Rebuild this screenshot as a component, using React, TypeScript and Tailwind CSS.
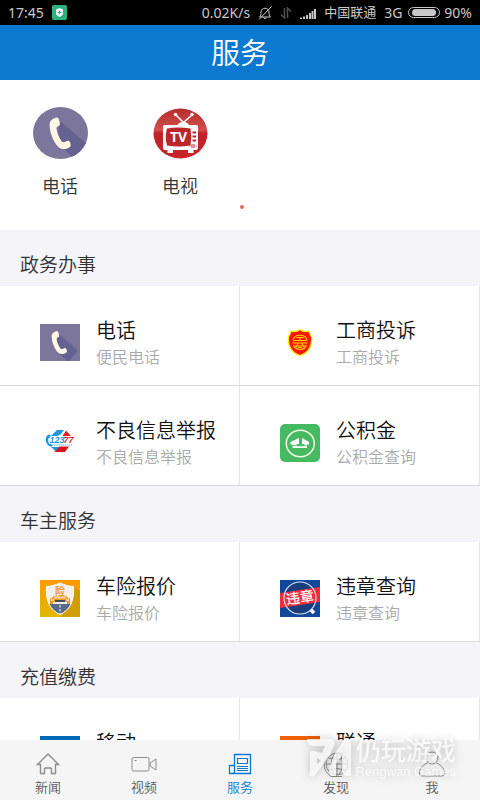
import React from "react";

type Item = { title: string; sub: string; icon: React.ReactNode };

const Phone = () => (
  <svg viewBox="0 0 40 37" className="h-[37px] w-10" aria-hidden="true">
    <path fill="#7c769d" d="M0 0h40v37H0z" />
    <path fill="#656191" d="M18 9 38 27l-9 10h-2L16 26z" />
    <PhoneShape />
  </svg>
);

const PhoneShape = () => (
  <path
    fill="#fdf8e4"
    d="M17 7c-2.500.3-5 2-5.300 4.600C11.400 18 15 26.500 19 29.300c2 1.400 6.500.8 7.800-1.300.5-1-.1-2.700-.9-3.600-.6-.7-1.800-.2-2.800.4-1 .5-2 .5-2.700-.4-2-2.700-3.300-6-3.800-9.200 0-1.200.5-1.600 1.500-2 .9-.4 1.100-1 1-1.800C18.900 9.600 18.300 7 17 7z"
  />
);

const PhoneRound = () => (
  <svg viewBox="0 0 55 52" className="h-[52px] w-[55px]" aria-hidden="true">
    <defs>
      <clipPath id="phone-round">
        <ellipse cx="27.500" cy="26" rx="27.500" ry="26" />
      </clipPath>
    </defs>
    <g clipPath="url(#phone-round)">
      <path fill="#7c769d" d="M0 0h55v52H0z" />
      <path fill="#656191" d="M27 14 55 38v14H41L24 35z" />
      <g transform="translate(0.500 0.800) scale(1.380 1.370)">
        <PhoneShape />
      </g>
    </g>
  </svg>
);

const Tv = () => (
  <svg viewBox="0 0 55 52" className="h-[52px] w-[55px]" aria-hidden="true">
    <defs>
      <clipPath id="tv-round">
        <ellipse cx="27.500" cy="26.500" rx="27" ry="25" />
      </clipPath>
      <linearGradient id="tv-red" x1="0" y1="0" x2="0" y2="1">
        <stop offset="0" stopColor="#b52a2c" />
        <stop offset="0.450" stopColor="#d0504b" />
        <stop offset="0.500" stopColor="#bd2328" />
        <stop offset="1" stopColor="#c9242a" />
      </linearGradient>
    </defs>
    <g clipPath="url(#tv-round)">
      <path fill="url(#tv-red)" d="M0 0h55v52H0z" />
      <path d="m22.500 7.500 8 8 9-8" stroke="#fff" strokeWidth="1.500" fill="none" />
      <circle cx="22.500" cy="7.500" r="1.700" fill="#fff" />
      <circle cx="39" cy="7.500" r="1.700" fill="#fff" />
      <path d="M24.500 18c1.500-4 10-4 11.500 0z" fill="#fff" />
      <rect x="10" y="18" width="35" height="25" rx="2" fill="#fff" />
      <path d="M14.500 42h5.500v4h-5.500zM35 42h5.500v4H35z" fill="#fff" />
      <path d="M14 21.500q11.500-2 23.500 0 1.500 8.500 0 17-12 2-23.500 0-2.500-8.500 0-17z" fill="#bd252a" />
      <text x="25.500" y="35" textAnchor="middle" fontSize="14" fontWeight="700" fill="#fff" className="font-['Open_Sans',sans-serif]">TV</text>
      <path d="M39.500 25.500h3.500m-3.500 4h3.500m-3.500 4h3.500" stroke="#bd252a" strokeWidth="2.200" />
      <path d="M37 38.500v1m2-2.500v4m2-4v4m2-2.500v1" stroke="#bd252a" strokeWidth="1" />
    </g>
  </svg>
);

const Shield = () => (
  <svg viewBox="0 0 40 37" className="h-[37px] w-10" aria-hidden="true">
    <path d="M20 5.500c3 2.500 5.500 2.500 9 1.700 1 3 2 4.300 2.700 6C32 22 28 29 20 31.500 12 29 8 22 8.300 13.200c.7-1.700 1.700-3 2.700-6 3.500.8 6 .8 9-1.700z" fill="#f8160b" stroke="#fff000" strokeWidth="1.300" />
    <g fill="none" stroke="#ffd400" strokeWidth="1.100">
      <path d="M13 16.500c1-7 13-7 14 0M13.500 21c2 6 11 6 13 0" />
      <path d="M16.500 13.500h7m-3.500 0v3m-6.500 0h13m-14 2.500h15M15 22h10m-7-2.500-2 4m6-4 2 4m-6 0h4" />
    </g>
  </svg>
);

const Hotline = () => (
  <svg viewBox="0 0 40 37" className="h-[37px] w-10" aria-hidden="true">
    <path d="m11 12 6-6h7l-4 5-3 1z" fill="#1b98e0" />
    <path d="m26 6.500 5 5.500h-8.500z" fill="#dc1e26" />
    <path d="m11 23 5 4.500 3-2 2.500-2.500z" fill="#1b98e0" />
    <path d="m19.500 22.500-5 5.500h10.500l4-5.500z" fill="#d9141c" />
    <path d="M8.500 10.500c-4 2.500-3.500 8 .2 11.300 1 1 3.300.9 3.800.1l-1.500-2.200-1.600.3c-1.300-2-1.500-4-.8-6l1.700-.4.2-2.500z" fill="#1b98e0" />
    <g fontSize="9" fontWeight="700" fontStyle="italic" className="font-['Liberation_Sans',sans-serif]">
      <text x="9.500" y="19" fill="#1b98e0">123</text>
      <text x="23.500" y="18.500" fill="#dc1e26">77</text>
    </g>
    <path d="M12 21h20" stroke="#58b2e6" strokeWidth="1" strokeDasharray="1.500 0.600" />
  </svg>
);

const Fund = () => (
  <svg viewBox="0 0 40 38" className="h-[38px] w-10" aria-hidden="true">
    <rect width="40" height="38" rx="5" fill="#45ba63" />
    <ellipse cx="20.300" cy="19.500" rx="14" ry="13.200" fill="none" stroke="#f4f7df" strokeWidth="1.500" />
    <path d="M19 14v6h-2v1.500h7V20h-2v-6l7 4v2.500h-2V24H12.500v-3.500H10.500V18z" fill="#fff" />
    <path d="M17 20v1.700h7V20M12 21.700h17" fill="none" stroke="#45ba63" strokeWidth="0.800" />
  </svg>
);

const Insurance = () => (
  <svg viewBox="0 0 40 37" className="h-[37px] w-10" aria-hidden="true">
    <defs>
      <linearGradient id="amber" x1="0" y1="0" x2="0" y2="1">
        <stop offset="0" stopColor="#ff9800" />
        <stop offset="1" stopColor="#dfb900" />
      </linearGradient>
      <clipPath id="badge">
        <path d="M20 3c5 2 9 3.500 13.500 3.500C34.500 21 30 30 20 34.500 10 30 5.500 21 6.500 6.500 11 6.500 15 5 20 3z" />
      </clipPath>
    </defs>
    <path fill="url(#amber)" d="M0 0h40v37H0z" />
    <path fill="#c99500" opacity="0.700" d="m34 6 6 5v26H21z" />
    <g clipPath="url(#badge)">
      <path fill="#f2f1ed" d="M0 0h40v37H0z" />
      <path fill="#576a8b" d="M0 24h40v13H0z" />
      <path d="M20 25v12" stroke="#fff" strokeWidth="1" strokeDasharray="2.500 1.500" />
    </g>
    <path d="M20 3c5 2 9 3.500 13.500 3.500C34.500 21 30 30 20 34.500 10 30 5.500 21 6.500 6.500 11 6.500 15 5 20 3z" fill="none" stroke="#fff" strokeWidth="1" />
    <text x="20" y="15" textAnchor="middle" fontSize="10" fontWeight="700" fill="#f59a25" className="font-['Noto_Sans_CJK_SC',sans-serif]">险</text>
    <path d="m13 16.500 1-.5h12l1 .5 1.500 2h1.500V24h-3v-2H13v2h-3v-5.500h1.500z" fill="#f29a25" />
    <path d="M13.500 18.500h13l-1-2h-11z" fill="#fbd9a0" />
    <path d="M15 20h10v2H15z" fill="#444c5c" />
    <path d="M11 20h3m12 0h3" stroke="#fff" strokeWidth="1.200" />
  </svg>
);

const Violation = () => (
  <svg viewBox="0 0 40 37" className="h-[37px] w-10" aria-hidden="true">
    <path fill="#10489a" d="M0 0h40v37H0z" />
    <circle cx="20" cy="18" r="16" fill="#1b3d7d" />
    <path fill="#ee2e3a" d="M0 13 40 7v15L0 28z" />
    <circle cx="20" cy="18" r="16" fill="none" stroke="#d9e2ef" strokeWidth="1.200" />
    <path d="m31 30 3 3" stroke="#fff" strokeWidth="3.500" />
    <text x="20" y="22.500" transform="rotate(-8 20 18)" textAnchor="middle" fontSize="14" fontWeight="500" fill="#fff" className="font-['Noto_Sans_CJK_SC',sans-serif]">违章</text>
  </svg>
);

const Mobile = () => <span className="block h-[37px] w-10 bg-[#0068b7]" />;
const Unicom = () => <span className="block h-[37px] w-10 bg-[#ef6100]" />;

const sections: { name: string; items: Item[] }[] = [
  {
    name: "政务办事",
    items: [
      { title: "电话", sub: "便民电话", icon: <Phone /> },
      { title: "工商投诉", sub: "工商投诉", icon: <Shield /> },
      { title: "不良信息举报", sub: "不良信息举报", icon: <Hotline /> },
      { title: "公积金", sub: "公积金查询", icon: <Fund /> },
    ],
  },
  {
    name: "车主服务",
    items: [
      { title: "车险报价", sub: "车险报价", icon: <Insurance /> },
      { title: "违章查询", sub: "违章查询", icon: <Violation /> },
    ],
  },
  {
    name: "充值缴费",
    items: [
      { title: "移动", sub: "", icon: <Mobile /> },
      { title: "联通", sub: "", icon: <Unicom /> },
    ],
  },
];

const tabs = [
  {
    name: "新闻",
    icon: <path d="M1.500 12.500 12 2l10.500 10.500H19.500V21.500H15.500V17q0-1-1-1h-5q-1 0-1 1v4.500h-4v-9z" strokeWidth="1.400" />,
  },
  {
    name: "视频",
    icon: (
      <>
        <rect x="0" y="5.500" width="17" height="13.500" rx="1.500" />
        <path d="m18 11 6-4v11l-6-4zM2.500 8.500h2" />
      </>
    ),
  },
  {
    name: "服务",
    icon: (
      <>
        <path d="M6.500 2.500h16v19h-21v-8h5zM6.500 13.500v6q0 2-2 2" strokeWidth="1.300" />
        <path d="M9.500 6.500h10v5h-10zM9 14.500h11m-11 2h11m-11 2h11" strokeWidth="1.200" />
      </>
    ),
  },
  {
    name: "发现",
    icon: (
      <>
        <ellipse cx="13" cy="12" rx="11" ry="11" />
        <ellipse cx="13" cy="12" rx="5.500" ry="11" />
        <path d="M13 1v22M2 12h22M4.500 6q8.500 3 17 0M4.500 18q8.500-3 17 0" />
        <path d="M4 4C-2 10-1 19 7 24.500h11" />
      </>
    ),
  },
  {
    name: "我",
    icon: (
      <>
        <circle cx="12" cy="6" r="6" />
        <path d="M7.500 11C2 13.500-.5 17-.5 21q0 3 2.500 3h20q2.500 0 2.500-3c0-4-2.500-7.500-8-10" />
      </>
    ),
  },
];

const StatusBar = () => (
  <div className="flex h-[25px] shrink-0 items-center justify-between bg-black px-2 text-sm font-normal text-[#c8c8c8]">
    <div className="flex items-center gap-2">
      <span>17:45</span>
      <svg viewBox="0 0 15 15" className="size-[15px]" aria-hidden="true">
        <rect width="15" height="15" rx="2" fill="#30b07c" />
        <path d="M7.500 3 11 4.500v3.700c0 1.600-1.500 2.800-3.500 3.800C5.500 11 4 9.800 4 8.200V4.500z" fill="#fff" />
        <path d="M7.500 5.500v4m-2-2h4" stroke="#30b07c" />
      </svg>
    </div>
    <div className="flex items-center gap-2">
      <span>0.02K/s</span>
      <svg viewBox="0 0 14 14" className="size-3.5" fill="none" stroke="#c8c8c8" aria-hidden="true">
        <path d="M1.500 11h11c-1.500-1-1.500-3-1.500-5 0-5-8-5-8 0 0 2 0 4-1.500 5zM5.500 11.500q1.500 2.500 3 0M13.500.5 1 13.500" />
      </svg>
      <svg viewBox="0 0 12 12" className="size-3" fill="none" stroke="#505050" strokeWidth="1.500" aria-hidden="true">
        <path d="M4.500 1v10L1 7.500M7.500 11V1L11 4.500" />
      </svg>
      <svg viewBox="0 0 16 12" className="h-3 w-4" stroke="#c8c8c8" strokeWidth="2" aria-hidden="true">
        <path d="M1 12v-1.500M4 12V9.500M7 12V8M10 12V6M12.500 12V4M15 12V2" />
      </svg>
      <span className="text-[13px]">中国联通</span>
      <span className="flex items-center gap-1.5">
        <span>3G</span>
        <span className="block h-[11px] w-8 rounded-full border border-[#c8c8c8] px-[3px] py-px">
          <span className="block h-full rounded-sm bg-[#c8c8c8]" />
        </span>
      </span>
      <span className="-ml-1">90%</span>
    </div>
  </div>
);

const Watermark = () => (
  <div className="pointer-events-none absolute right-6 bottom-5 flex items-center gap-1 text-white/75 drop-shadow-[0_0_5px_rgba(0,0,0,0.3)]">
    <svg viewBox="0 0 46 40" className="h-10 w-[46px]" fill="currentColor" aria-hidden="true">
      <path
        fillRule="evenodd"
        d="M1 1h23q6 0 4 6l-4 10L10 36q-3 4-6 2V16q0-4 4-3l8 2 3-7H6Q2 8 1 1zM11 20v6l4-3z"
      />
      <path d="m28 17 9-14q1-2 4-2h4v37q-8 1-9-5V17l-6 9v12q-7 0-7-6z" />
    </svg>
    <div className="flex flex-col items-end">
      <span className="text-[25px] leading-7 font-medium">仍玩游戏</span>
      <span className="font-['Liberation_Sans',sans-serif] text-[13px] leading-4 font-normal">Rengwan Games</span>
    </div>
  </div>
);

export default function App() {
  return (
    <div className="relative flex h-screen flex-col overflow-hidden bg-[#f4f4f9] font-['Noto_Sans','Noto_Sans_CJK_SC',sans-serif] font-[350]">
      <StatusBar />
      <header className="flex h-[55px] shrink-0 items-center justify-center bg-[#0b79d0]">
        <h1 className="text-[29px] leading-none font-[350] text-white">服务</h1>
      </header>
      <main className="min-h-0 flex-1 overflow-hidden">
        <div className="flex h-[150px] flex-col bg-white">
          <div className="grid grid-cols-4 pt-[27px]">
            <button type="button" className="flex flex-col items-center gap-[15px] text-lg text-[#333]">
              <PhoneRound />
              <span className="leading-6">电话</span>
            </button>
            <button type="button" className="flex flex-col items-center gap-[15px] text-lg text-[#333]">
              <Tv />
              <span className="leading-6">电视</span>
            </button>
          </div>
          <div className="flex justify-center pt-[7px] pl-1">
            <span className="size-1 rounded-full bg-[#f0655c]" />
          </div>
        </div>
        {sections.map((s) => (
          <section key={s.name}>
            <h2 className="flex h-14 items-center px-5 pt-[15px] text-[19px] text-[#333]">{s.name}</h2>
            <div className="grid grid-cols-2">
              {s.items.map((it) => (
                <button
                  type="button"
                  key={it.title}
                  className="flex h-[100px] items-center gap-4 border-r border-b border-[#d8d8dc] border-r-[#e4e4e8] bg-white pt-[14px] pl-10 text-left"
                >
                  {it.icon}
                  <span className="flex flex-col">
                    <span className="text-xl leading-7 text-[#111]">{it.title}</span>
                    <span className="h-6 text-base leading-6 text-[#aaa]">{it.sub}</span>
                  </span>
                </button>
              ))}
            </div>
          </section>
        ))}
      </main>
      <nav className="grid h-[60px] shrink-0 grid-cols-5 bg-[#f5f5f5]">
        {tabs.map((t) => (
          <button
            type="button"
            key={t.name}
            aria-current={t.name === "服务" ? "page" : undefined}
            className="flex flex-col items-center pt-3 text-[13px] leading-[22px] text-[#555] aria-[current=page]:text-[#0b79d0]"
          >
            <svg
              viewBox="0 0 24 24"
              className={t.name === "服务" ? "size-6 overflow-visible" : "size-6 overflow-visible text-[#8c8c8c]"}
              fill="none"
              stroke="currentColor"
              aria-hidden="true"
            >
              {t.icon}
            </svg>
            <span>{t.name}</span>
          </button>
        ))}
      </nav>
      <Watermark />
    </div>
  );
}
